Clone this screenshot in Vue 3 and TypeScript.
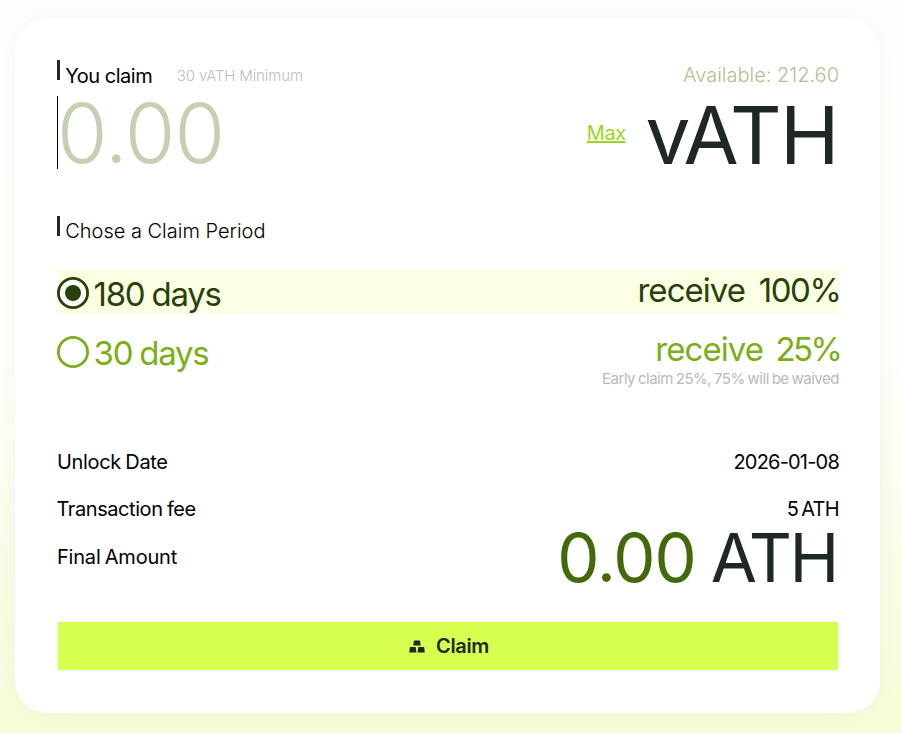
<script setup lang="ts">
import { ref } from 'vue'

interface Period {
  days: number
  percent: number
  note?: string
}

const periods: Period[] = [
  { days: 180, percent: 100 },
  { days: 30, percent: 25, note: 'Early claim 25%, 75% will be waived' },
]
const selected = ref(180)
</script>

<template>
  <main class="page">
    <section class="card">
      <header class="head">
        <i class="bar"></i>
        <span class="title">You claim</span>
        <span class="minimum">30 vATH Minimum</span>
        <span class="available">Available: 212.60</span>
      </header>
      <div class="amount">
        <i class="caret"></i>
        <span class="placeholder">0.00</span>
        <a class="max">Max</a>
        <span class="token">vATH</span>
      </div>
      <div class="head period-head">
        <i class="bar"></i>
        <span class="period-title">Chose a Claim Period</span>
      </div>
      <div
        v-for="p in periods"
        :key="p.days"
        class="option"
        :class="{ active: p.days === selected }"
        @click="selected = p.days"
      >
        <svg class="radio" viewBox="0 0 32 32">
          <circle class="ring" cx="16" cy="16" r="14.6" />
          <circle v-if="p.days === selected" class="dot" cx="16" cy="16" r="8" />
        </svg>
        <span class="days">{{ p.days }} days</span>
        <div class="reward">
          <span class="receive"><span class="word">receive</span><span class="percent" :class="{ partial: p.percent < 100 }">{{ p.percent }}%</span></span>
          <span v-if="p.note" class="note">{{ p.note }}</span>
        </div>
      </div>
      <dl class="summary">
        <div class="line"><dt class="l-unlock">Unlock Date</dt><dd class="v-date">2026-01-08</dd></div>
        <div class="line"><dt class="l-fee">Transaction fee</dt><dd class="v-fee">5 ATH</dd></div>
        <div class="line">
          <dt class="l-final">Final Amount</dt>
          <dd class="final"><span class="final-num">0.00</span><span class="final-unit">ATH</span></dd>
        </div>
      </dl>
      <button class="claim">
        <svg class="blocks" viewBox="0 0 16 13">
          <path d="M5.500 0.500h5q.5 0 .6.500l.6 4.500H4.300l.6-4.500q.1-.5.600-.5zM1.400 7h4.800q.5 0 .6.500l.6 5H.2l.6-5q.1-.5.600-.5zM9.800 7h4.800q.5 0 .6.500l.6 5H8.600l.6-5q.1-.5.600-.5z" />
        </svg>
        <span class="claim-text">Claim</span>
      </button>
    </section>
  </main>
</template>

<style>
body {
  margin: 0;
}
</style>

<style scoped>
.page {
  box-sizing: border-box;
  width: 902px;
  height: 733px;
  padding: 18px 22px 20px 15px;
  overflow: hidden;
  background: linear-gradient(180deg, #fefefc 0%, #fefefa 50%, #f9fee2 85%, #f5fdd8 100%);
  font-family: Inter, "Liberation Sans", sans-serif;
}
.card {
  box-sizing: border-box;
  width: 865px;
  height: 695px;
  padding: 42px 41px 0 42px;
  border-radius: 32px;
  background: #fff;
  box-shadow: 0 0 30px rgba(30, 40, 40, 0.035);
  white-space: nowrap;
}
.head {
  display: flex;
  align-items: flex-start;
  height: 36px;
  line-height: 32px;
}
.bar {
  width: 3px;
  height: 20px;
  margin-right: 5.2px;
  background: #1e2926;
}
.title {
  font-size: 20px;
  letter-spacing: -0.48px;
}
.minimum {
  margin-left: 24.5px;
  font-size: 15px;
  font-weight: 300;
  letter-spacing: -0.12px;
  color: #b9bec1;
}
.available {
  margin-left: auto;
  line-height: 30px;
  font-size: 20px;
  font-weight: 300;
  color: #b0c090;
}
.amount {
  display: flex;
  height: 120px;
  line-height: 74px;
}
.caret {
  width: 1px;
  height: 73px;
  background: #000;
}
.placeholder {
  margin-left: -1px;
  line-height: 75px;
  font-size: 82px;
  font-weight: 275;
  letter-spacing: -0.9px;
  color: #c5d0b3;
}
.max {
  margin-left: auto;
  margin-right: 20px;
  font-size: 20px;
  letter-spacing: -0.5px;
  color: #97d71a;
  text-decoration: underline;
}
.token {
  margin-right: 1.2px;
  line-height: 78px;
  font-size: 80px;
  letter-spacing: -1.7px;
  color: #1e2926;
}
.period-head {
  height: 53px;
  line-height: 30px;
}
.period-title {
  font-size: 20px;
  font-weight: 300;
}
.option {
  display: flex;
  height: 45px;
  margin-bottom: 14px;
  font-size: 33px;
  color: #7aaf16;
}
.option.active {
  background: #fbffe3;
  color: #284108;
}
.radio {
  width: 32px;
  height: 32px;
  margin-top: 8px;
}
.ring {
  fill: #fff;
  stroke: currentColor;
  stroke-width: 2.8;
}
.dot {
  fill: currentColor;
}
.days {
  margin-left: 4.5px;
  line-height: 51px;
  letter-spacing: -1.25px;
  word-spacing: -1px;
}
.reward {
  display: flex;
  flex-direction: column;
  align-items: flex-end;
  margin-left: auto;
}
.receive {
  display: flex;
  gap: 13.500px;
  line-height: 43px;
}
.word {
  letter-spacing: -0.95px;
}
.percent {
  margin-right: -1.5px;
  letter-spacing: -1.4px;
}
.percent.partial {
  margin-right: -1.3px;
  letter-spacing: -2.600px;
}
.partial {
  margin-left: -1px;
}
.note {
  line-height: 15px;
  font-size: 15px;
  letter-spacing: -0.48px;
  word-spacing: -0.9px;
  color: #b5babc;
}
.summary {
  margin: 0;
  padding-top: 51px;
  font-size: 20px;
}
.line {
  display: flex;
  justify-content: space-between;
  height: 47px;
  line-height: 48px;
}
.line dd {
  margin: 0;
}
.l-unlock {
  letter-spacing: -0.35px;
  word-spacing: -0.8px;
}
.l-fee {
  margin-left: -0.5px;
  letter-spacing: -0.43px;
  word-spacing: -0.8px;
}
.l-final {
  line-height: 50px;
  letter-spacing: -0.2px;
  word-spacing: -1.2px;
}
.v-date {
  letter-spacing: -0.8px;
}
.v-fee {
  letter-spacing: -0.7px;
  word-spacing: -1.8px;
}
.line .final {
  display: flex;
  gap: 15px;
  line-height: 52px;
  font-size: 67px;
}
.final-num {
  letter-spacing: -1px;
  color: #42690a;
}
.final-unit {
  margin-right: 2.4px;
  letter-spacing: -2.600px;
  color: #1e2926;
}
.claim {
  display: flex;
  align-items: center;
  justify-content: center;
  width: 780px;
  height: 48px;
  margin: 43px 0 0 1px;
  padding: 0 0 0 2px;
  border: 0;
  background: #d7ff50;
  box-shadow: 0 0 3px rgba(30, 40, 80, 0.14);
  color: #1e2926;
  font-family: inherit;
  font-size: 20px;
  font-weight: 600;
}
.claim-text {
  letter-spacing: -0.35px;
}
.blocks {
  width: 16px;
  height: 13px;
  margin-right: 11px;
  fill: currentColor;
}
</style>
